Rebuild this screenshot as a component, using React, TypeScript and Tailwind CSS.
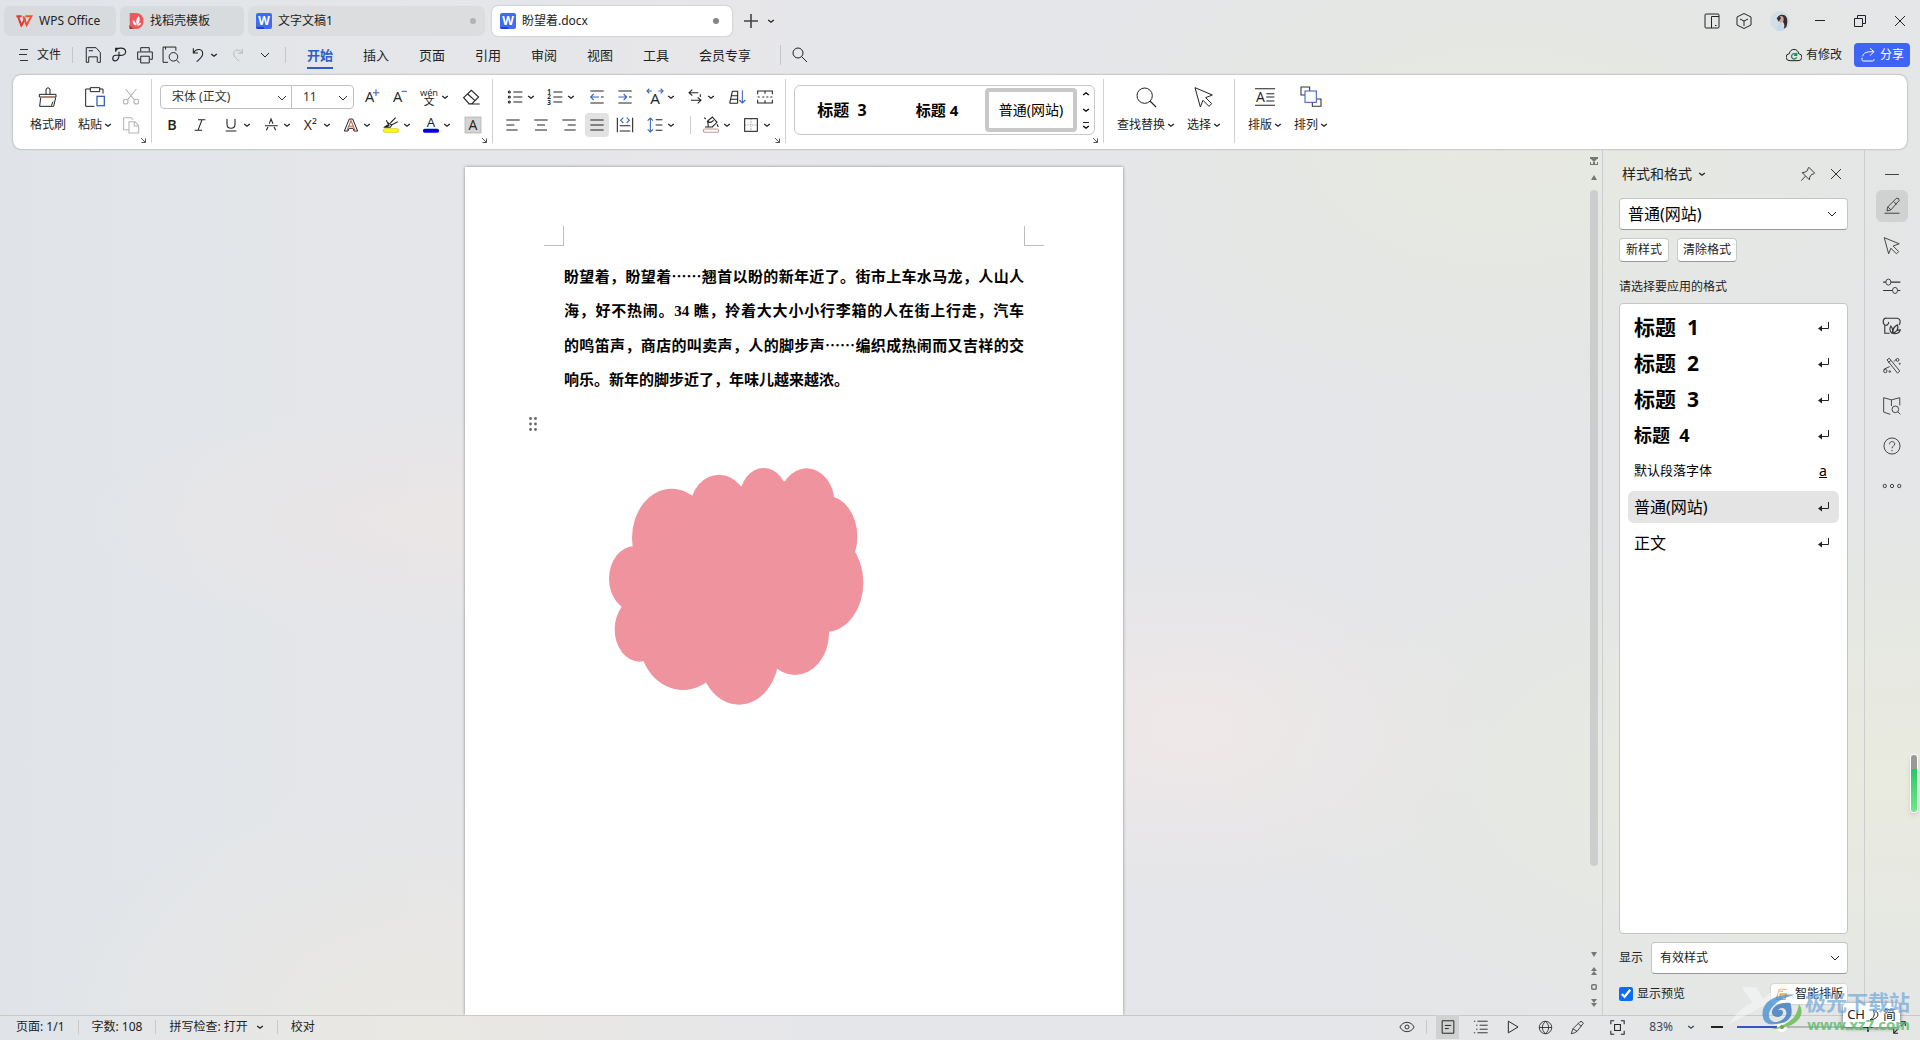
import { useState, type ReactNode } from "react";
import clsx from "clsx";

const BLUE = "#3a62c4";

/* Icons are drawn on a grid with three units per pixel */
function Icon({ size = 24, children, className }: { size?: number; children: ReactNode; className?: string }) {
  return (
    <svg
      width={size}
      height={size}
      viewBox="0 0 72 72"
      fill="none"
      stroke="currentColor"
      strokeWidth={3.2}
      className={clsx("shrink-0", className)}
      aria-hidden="true"
    >
      {children}
    </svg>
  );
}

function Letter({ x = 36, y = 52, size = 44, weight = 400, fill = "currentColor", children }: { x?: number; y?: number; size?: number; weight?: number; fill?: string; children: string }) {
  return (
    <text x={x} y={y} fontSize={size} fontWeight={weight} fill={fill} stroke="none" textAnchor="middle" fontFamily="'Open Sans', 'Noto Sans CJK SC', sans-serif">
      {children}
    </text>
  );
}

function Chevron({ className }: { className?: string }) {
  return (
    <svg width="8" height="8" viewBox="0 0 8 8" fill="none" stroke="currentColor" strokeWidth="1.4" className={clsx("shrink-0", className)} aria-hidden="true">
      <path d="M1.2 3 4 5.2 6.800 3" />
    </svg>
  );
}

function WideChevron({ className }: { className?: string }) {
  return (
    <svg width="10" height="10" viewBox="0 0 10 10" fill="none" stroke="currentColor" strokeWidth="1" className={clsx("pointer-events-none", className)} aria-hidden="true">
      <path d="M1 3l4 4 4-4" />
    </svg>
  );
}

function ToolButton({ label, menu, active, children, className }: { label: string; menu?: boolean; active?: boolean; children: ReactNode; className?: string }) {
  return (
    <button
      aria-label={label}
      className={clsx("flex h-6 shrink-0 items-center", menu ? "w-10" : "w-7 justify-center", className)}
    >
      <span className={clsx("rounded", active && "bg-[#e2e2e2]")}>{children}</span>
      {menu && <Chevron />}
    </button>
  );
}

function BigButton({ label, menu, children }: { label: string; menu?: boolean; children: ReactNode }) {
  return (
    <button className="flex shrink-0 flex-col items-center gap-[6px] text-xs">
      {children}
      <span className="flex h-5 items-center gap-[2px]">
        {label}
        {menu && <Chevron />}
      </span>
    </button>
  );
}

function Launcher() {
  return (
    <svg width="7" height="7" viewBox="0 0 7 7" fill="none" stroke="#555" className="absolute right-1 -bottom-px" aria-hidden="true">
      <path d="M1 1l4.500 4.500M5.500 1.500v4h-4" />
    </svg>
  );
}

function WordLogo() {
  return (
    <span className="relative flex size-4 shrink-0 items-center justify-center overflow-hidden rounded-xs bg-[#3f6af6] text-xs leading-none font-bold text-white">
      W
      <span className="absolute bottom-0 left-0 h-0.5 w-2 bg-[#1c46c8]" />
    </span>
  );
}

function TitleBar() {
  return (
    <header className="flex h-[41px] shrink-0 items-center pl-1 text-xs">
      <button className="flex h-[30px] w-28 items-center gap-[6px] rounded-md bg-[#d8dbde] pl-3">
        <svg width="17" height="12" viewBox="0 0 51 36" fill="none" stroke="#e23a33" strokeWidth="6" aria-hidden="true">
          <path d="M1 4h16M6 4l10 28 12-22" />
          <path d="M22 4l10 26L46 4H28" stroke="#ef5336" />
        </svg>
        WPS Office
      </button>
      <button className="ml-1 flex h-[30px] w-[124px] items-center gap-[6px] rounded-md bg-[#d8dbde] pl-[9px]">
        <svg width="15" height="16" viewBox="0 0 45 48" aria-hidden="true">
          <path d="M2 0h20a22 24 0 0 1 0 48H2z" fill="#ee5a5c" />
          <path d="M0 36l14 12H2z" fill="#a93a3c" />
          <path d="M22 38c-10-2-12-10-10-16 6 2 9 8 10 16zm2 0C20 26 22 14 30 10c4 10 2 20-6 28zm2 0c2-6 6-9 10-9 0 5-4 9-10 9z" fill="#fff" />
        </svg>
        找稻壳模板
      </button>
      <button className="ml-1 flex h-[30px] w-[237px] items-center gap-[6px] rounded-md bg-[#dcdddf] pr-[9px] pl-2">
        <WordLogo />
        文字文稿1
        <span className="ml-auto size-[6px] rounded-full bg-[#b0b2b4]" />
      </button>
      <button className="ml-[7px] flex h-[30px] w-60 items-center gap-[6px] rounded-md bg-white pr-[13px] pl-2 shadow-[0_0_2px_#00000040]">
        <WordLogo />
        盼望着.docx
        <span className="ml-auto size-[6px] rounded-full bg-[#858585]" />
      </button>
      <button aria-label="新建" className="ml-3 flex size-[14px]">
        <svg width="14" height="14" viewBox="0 0 14 14" stroke="#444" strokeWidth="1.600" aria-hidden="true">
          <path d="M7 0v14M0 7h14" />
        </svg>
      </button>
      <button aria-label="标签列表" className="ml-[9px]">
        <Chevron />
      </button>

      <div className="ml-auto flex items-center">
        <button aria-label="分屏" className="flex w-8 justify-center">
          <Icon size={18}><rect x="8" y="8" width="56" height="56" rx="4" strokeWidth="4" /><path d="M34 64V18h30M48 54h6" strokeWidth="4" /></Icon>
        </button>
        <button aria-label="工作台" className="flex w-8 justify-center">
          <Icon size={18}><path d="M36 6l28 14v32L36 66 8 52V20zM20 28l16 8 16-8M36 36v20" strokeWidth="4" /></Icon>
        </button>
        <button aria-label="账号" className="mr-[10px] ml-[10px] flex w-5 justify-center">
          <svg width="20" height="20" viewBox="0 0 60 60" aria-hidden="true">
            <circle cx="30" cy="30" r="30" fill="#d4dee4" />
            <path d="M20 60c0-14 4-22 14-26l6 26z" fill="#c6d8ea" />
            <path d="M22 20c4-10 22-12 27-2 5 8 3 22 0 30l-8 6c4-10 2-20-6-24z" fill="#352d33" />
            <ellipse cx="33" cy="25" rx="8" ry="10" fill="#cfa79f" />
            <path d="M20 22l9-8 4 8-7 10z" fill="#353037" />
          </svg>
        </button>
        <button aria-label="最小化" className="flex w-10 justify-center">
          <svg width="10" height="10" viewBox="0 0 10 10" stroke="#222" aria-hidden="true"><path d="M0 4.500h10" /></svg>
        </button>
        <button aria-label="还原" className="flex w-10 justify-center">
          <svg width="12" height="12" viewBox="0 0 12 12" fill="none" stroke="#222" aria-hidden="true"><path d="M.5 3.500h8v8h-8zM3.500 3.500v-3h8v8h-3" /></svg>
        </button>
        <button aria-label="关闭" className="flex w-10 justify-center">
          <svg width="10" height="10" viewBox="0 0 10 10" stroke="#222" aria-hidden="true"><path d="M0 0l10 10M10 0L0 10" /></svg>
        </button>
      </div>
    </header>
  );
}

const menus = ["开始", "插入", "页面", "引用", "审阅", "视图", "工具", "会员专享"];

function MenuBar() {
  const [current, setCurrent] = useState("开始");
  return (
    <nav className="flex h-[34px] shrink-0 items-start pr-[10px] pl-[17px] text-xs text-[#222]">
      <div className="flex h-[28px] items-center">
        <button className="flex w-[55px] items-center gap-2">
          <svg width="12" height="12" viewBox="0 0 12 12" stroke="#333" aria-hidden="true"><path d="M3 .5h8M2 5.500h8M3 11.500h8" /></svg>
          文件
        </button>
        <div className="h-4 w-px bg-[#c4c6c9]" />
        <button aria-label="保存" className="ml-2 flex w-6 justify-center">
          <Icon size={22}><path d="M14 12h32l14 16v32h-8M14 12v48h8M22 60V42h28v18M22 22h14" strokeLinejoin="round" /></Icon>
        </button>
        <button aria-label="输出为PDF" className="ml-[2px] flex w-6 justify-center">
          <Icon size={20}><path d="M34 14H24v12M24 26c2-16 34-18 36 0 0 14-14 14-24 13M36 39H24c-12 0-14 18-4 20 10 1 16-8 16-20V26" transform="translate(0 -2)" strokeWidth="4" /></Icon>
        </button>
        <button aria-label="打印" className="ml-[2px] flex w-6 justify-center">
          <Icon size={22}><path d="M22 24V12h28v12M20 50H12V26h48v24h-8M22 40h28v22H22z" /></Icon>
        </button>
        <button aria-label="打印预览" className="ml-[2px] flex w-6 justify-center">
          <Icon size={22}><path d="M26 60H10V10h42v12M18 10v8" /><circle cx="44" cy="42" r="14" /><path d="M54 53l10 9" /></Icon>
        </button>
        <button aria-label="撤销" className="ml-[3px] flex w-9 items-center">
          <Icon size={24}><path d="M22 16v14h14M22 30C32 14 50 18 50 32c0 10-8 14-18 24" /></Icon>
          <Chevron />
        </button>
        <button aria-label="恢复" className="ml-1 flex w-6 justify-center text-[#b5b7b9]">
          <Icon size={22}><path d="M50 16v14H36M50 30C40 14 22 18 22 32c0 10 8 14 18 24" /></Icon>
        </button>
        <button aria-label="更多" className="ml-[5px] flex w-5 justify-center"><WideChevron /></button>
        <div className="ml-[10px] h-4 w-px bg-[#c4c6c9]" />
      </div>
      <div className="ml-[21px] flex gap-[30px] text-[13px]">
        {menus.map((m) => (
          <button
            key={m}
            onClick={() => setCurrent(m)}
            className={clsx("flex h-7 items-center border-b-2 pt-[3px]", current === m ? "border-[#2f5dc8] font-bold text-[#2f5dc8]" : "border-transparent")}
          >
            {m}
          </button>
        ))}
      </div>
      <div className="flex h-[28px] items-center">
        <div className="ml-[29px] h-5 w-px bg-[#c4c6c9]" />
        <button aria-label="搜索" className="ml-[10px]">
          <Icon size={18}><circle cx="28" cy="28" r="20" strokeWidth="4" /><path d="M42 42l22 22" strokeWidth="4" /></Icon>
        </button>
      </div>
      <div className="ml-auto flex h-[28px] items-center gap-3">
        <button className="flex items-center gap-1">
          <svg width="16" height="14" viewBox="0 0 48 42" fill="none" stroke="#222" strokeWidth="3" aria-hidden="true">
            <path d="M12 38a10 10 0 0 1-2-21C12 0 36 0 38 17a10 10 0 0 1-2 21z" />
            <path d="M32 22a8 8 0 1 0 0 6M32 14v8h-8" stroke="#1c8c5a" strokeWidth="4" />
          </svg>
          有修改
        </button>
        <button className="flex h-6 items-center gap-1 rounded bg-[#3d64f5] px-[6px] text-white">
          <svg width="16" height="16" viewBox="0 0 48 48" fill="none" stroke="#fff" strokeWidth="3" aria-hidden="true">
            <path d="M6 32v6q0 4 4 4h28q4 0 4-4v-2M8 28c2-10 10-14 32-14M30 4l12 10-12 12" />
          </svg>
          分享
        </button>
      </div>
    </nav>
  );
}

function FontGroup() {
  return (
    <div className="relative flex h-16 w-[341px] shrink-0 flex-col border-r border-[#cfd1d4] pt-[6px]">
      <div className="flex items-center pl-2">
        <div className="flex h-6 shrink-0 rounded border border-[#bfc1c4] text-xs text-[#333]">
          <div className="relative w-[131px] border-r border-[#bfc1c4]">
            <select aria-label="字体" className="h-full w-full appearance-none pl-[11px]"><option>宋体 (正文)</option></select>
            <WideChevron className="absolute top-[7px] right-1" />
          </div>
          <div className="relative w-[61px]">
            <select aria-label="字号" className="h-full w-full appearance-none pl-[11px]"><option>11</option></select>
            <WideChevron className="absolute top-[7px] right-[5px]" />
          </div>
        </div>
        <ToolButton label="增大字号" className="ml-[3px]">
          <Icon><Letter x={32}>A</Letter><path d="M51 13v20M42 23h19" stroke={BLUE} /></Icon>
        </ToolButton>
        <ToolButton label="减小字号">
          <Icon><Letter x={32}>A</Letter><path d="M44 19h16" stroke={BLUE} /></Icon>
        </ToolButton>
        <ToolButton label="拼音指南" menu className="ml-1">
          <Icon><Letter y={32} size={28}>wén</Letter><Letter y={60} size={32}>文</Letter></Icon>
        </ToolButton>
        <ToolButton label="清除格式">
          <Icon><path d="M14 38l23-22 22 20-20 20H30zM26 27l22 20M28 57h34" /></Icon>
        </ToolButton>
      </div>
      <div className="mt-1 flex items-center pl-[6px]">
        <ToolButton label="加粗"><Icon><Letter weight={600} size={43}>B</Letter></Icon></ToolButton>
        <ToolButton label="倾斜"><Icon><path d="M30 20h22M20 52h22M42 20L30 52" /></Icon></ToolButton>
        <ToolButton label="下划线" menu className="ml-[5px]"><Icon><path d="M24 18v16c0 16 24 16 24 0V18M20 54h32" /></Icon></ToolButton>
        <ToolButton label="删除线" menu><Icon><path d="M18 38h38M22 52l5-10M50 52l-5-10M31 32l5-14 6 14" /></Icon></ToolButton>
        <ToolButton label="上标" menu><Icon><Letter size={42} x={34}>X²</Letter></Icon></ToolButton>
        <ToolButton label="文字效果" menu>
          <Icon><path d="M16 54l15-36h10l15 36H45l-3-8H30l-3 8z" strokeWidth="3" /><path d="M24 52l12-29 12 29M30 40h12" stroke="#c0603c" /></Icon>
        </ToolButton>
        <ToolButton label="突出显示" menu>
          <Icon><path d="M14 44l12-8M22 22l8 16-14 5h18l6-10M24 28l14 8 18-10M34 30l16-16" /><rect x="13" y="47" width="46" height="11" rx="5" fill="#ffff00" stroke="#c0c010" strokeWidth="2" /></Icon>
        </ToolButton>
        <ToolButton label="字体颜色" menu>
          <Icon><Letter y={42} size={40}>A</Letter><rect x="12" y="47" width="48" height="12" rx="5" fill="#0000e0" stroke="none" /></Icon>
        </ToolButton>
        <ToolButton label="字符底纹">
          <Icon><rect x="12" y="12" width="48" height="48" fill="#d4d4d4" stroke="#a8a8a8" strokeWidth="2" /><Letter y={51} size={42}>A</Letter></Icon>
        </ToolButton>
      </div>
      <Launcher />
    </div>
  );
}

function ParagraphGroup() {
  return (
    <div className="relative flex h-16 w-[293px] shrink-0 flex-col border-r border-[#cfd1d4] pt-[6px]">
      <div className="flex items-center pl-[10px]">
        <ToolButton label="项目符号" menu>
          <Icon><path d="M31 21h27M31 36h27M31 51h27" /><circle cx="19" cy="21" r="3" /><circle cx="19" cy="36" r="3" /><circle cx="19" cy="51" r="3" /></Icon>
        </ToolButton>
        <ToolButton label="编号" menu>
          <Icon><path d="M31 21h27M31 36h27M31 51h27" /><Letter x={18} y={27} size={19} weight={700}>1</Letter><Letter x={18} y={43} size={19} weight={700}>2</Letter><Letter x={18} y={59} size={19} weight={700}>3</Letter></Icon>
        </ToolButton>
        <ToolButton label="减少缩进"><Icon><path d="M16 18h40M16 54h40M48 36h8" /><path d="M42 36H18M26 27l-9 9 9 9" stroke={BLUE} /></Icon></ToolButton>
        <ToolButton label="增加缩进"><Icon><path d="M16 18h40M16 54h40M48 36h8" /><path d="M16 36h24M32 27l9 9-9 9" stroke={BLUE} /></Icon></ToolButton>
        <ToolButton label="中文版式" menu className="ml-1">
          <Icon><Letter y={56} size={46}>A</Letter><path d="M26 18H13M19 11l-7 7 7 7M46 18h13M53 11l7 7-7 7" stroke={BLUE} /></Icon>
        </ToolButton>
        <ToolButton label="段落方向" menu><Icon><path d="M28 14l-10 9 10 9M18 23h28M44 37l10 9-10 9M54 46H24M52 28v8" /></Icon></ToolButton>
        <ToolButton label="排序"><Icon><path d="M14 55l8-36h16v36M20 32h18M17 43h21M14 55h24" /><path d="M52 16v38M43 45l9 9 9-9" stroke={BLUE} /></Icon></ToolButton>
        <ToolButton label="制表位"><Icon><path d="M14 28V18h44v10M14 44v10h44V44M36 18v8M36 46v8M14 36h6M28 36h6M40 36h6M52 36h6" /></Icon></ToolButton>
      </div>
      <div className="mt-1 flex items-center pl-[6px]">
        <ToolButton label="左对齐"><Icon><path d="M16 21h40M16 36h24M16 51h34" /></Icon></ToolButton>
        <ToolButton label="居中对齐"><Icon><path d="M16 21h40M24 36h24M18 51h36" /></Icon></ToolButton>
        <ToolButton label="右对齐"><Icon><path d="M16 21h40M32 36h24M22 51h34" /></Icon></ToolButton>
        <ToolButton label="两端对齐" active><Icon><path d="M16 21h40M16 36h40M16 51h40" /></Icon></ToolButton>
        <ToolButton label="分散对齐">
          <Icon><path d="M13 14v44M59 14v44M20 38h32M20 54h32" /><path d="M31 14l-8 8 8 8M41 14l8 8-8 8" stroke={BLUE} /></Icon>
        </ToolButton>
        <ToolButton label="行距" menu className="ml-1">
          <Icon><path d="M38 20h20M38 36h20M38 52h20" /><path d="M22 15v42M14 23l8-8 8 8M14 49l8 8 8-8" stroke={BLUE} /></Icon>
        </ToolButton>
        <div className="mr-2 ml-[7px] h-[18px] w-px bg-[#cfd1d4]" />
        <ToolButton label="底纹颜色" menu>
          <Icon><path d="M26 24l14-12 14 16-14 14H28zM24 24c6 6 14 4 20-2M20 18l-4-4M54 34l4 8M18 42h12" /><rect x="13" y="48" width="46" height="10" rx="5" stroke="#c39a94" /></Icon>
        </ToolButton>
        <ToolButton label="边框" menu>
          <Icon><path d="M36 18v36M18 36h36" stroke="#aaa" strokeDasharray="4 3" /><rect x="17" y="17" width="38" height="38" /></Icon>
        </ToolButton>
      </div>
      <Launcher />
    </div>
  );
}

function Ribbon() {
  return (
    <section aria-label="工具栏" className="mr-[13px] ml-[13px] flex h-[74px] shrink-0 items-start rounded-lg bg-white pt-1 text-[#222] shadow-[0_0_2px_#00000070]">
      <div className="relative flex h-16 w-[139px] shrink-0 border-r border-[#cfd1d4] pt-[6px] pl-[17px]">
        <BigButton label="格式刷">
          <Icon><path d="M30 28V12q6-8 12 0v16M10 28h50v8H10zM14 38l-3 26h42l6-26M46 62l5-12" strokeWidth="3" strokeLinejoin="round" /><path d="M26 37h22" stroke="#e4703a" /></Icon>
        </BigButton>
        <div className="ml-3">
          <BigButton label="粘贴" menu>
            <Icon><path d="M22 12H8v52h26M50 12h10v14M22 8h28v12H22z" strokeWidth="3" /><rect x="42" y="34" width="22" height="28" stroke={BLUE} strokeWidth="4" /></Icon>
          </BigButton>
        </div>
        <div className="ml-[7px] flex flex-col gap-1 text-[#b4b4b4]">
          <button aria-label="剪切"><Icon><path d="M20 12l26 32M52 12L26 44" /><circle cx="20" cy="50" r="7" /><circle cx="52" cy="50" r="7" /></Icon></button>
          <button aria-label="复制"><Icon><path d="M28 50H14V14h22l6 6M30 26h18l11 12v22H30zM46 26v13h12" /></Icon></button>
        </div>
        <Launcher />
      </div>
      <FontGroup />
      <ParagraphGroup />

      <div className="relative flex h-16 w-[318px] shrink-0 border-r border-[#cfd1d4] pt-[6px] pl-2">
        <div className="flex h-[50px] w-[301px] items-center rounded-md border border-[#c6c8cb] text-black">
          <button className="w-[94px] text-base font-bold">标题&nbsp; 3</button>
          <button className="w-24 text-[15px] font-bold">标题 4</button>
          <button className="h-11 w-[92px] rounded-sm border-4 border-[#c8c8c8] text-sm">普通(网站)</button>
          <div className="flex flex-1 flex-col items-center gap-2">
            <button aria-label="上一行"><Chevron className="rotate-180" /></button>
            <button aria-label="下一行"><Chevron /></button>
            <button aria-label="全部样式" className="flex flex-col items-center"><span className="h-px w-[6px] bg-[#222]" /><Chevron /></button>
          </div>
        </div>
        <Launcher />
      </div>

      <div className="flex h-16 w-[131px] shrink-0 gap-3 border-r border-[#cfd1d4] pt-[6px] pl-[13px]">
        <BigButton label="查找替换" menu>
          <Icon><circle cx="32" cy="32" r="23" strokeWidth="3" /><path d="M48 48l18 18" /></Icon>
        </BigButton>
        <BigButton label="选择" menu>
          <Icon><path d="M9 8l52 22-20 8 18 18-8 8-18-18-8 20z" strokeWidth="3" /></Icon>
        </BigButton>
      </div>
      <div className="flex h-16 gap-3 pt-[6px] pl-[13px]">
        <BigButton label="排版" menu>
          <Icon><path d="M6 11h60M6 61h60M40 26h24M40 36h24M40 48h24" /><Letter x={22} y={50} size={42}>A</Letter></Icon>
        </BigButton>
        <BigButton label="排列" menu>
          <Icon><path d="M18 30H6V6h26v12M54 42h12v22H40V52" stroke="#333" /><rect x="18" y="18" width="34" height="34" stroke={BLUE} /></Icon>
        </BigButton>
      </div>
    </section>
  );
}

function DocumentPage() {
  return (
    <article className="relative h-full w-[658px] shrink-0 bg-white px-[99px] pt-[59px] text-black shadow-[0_0_3px_#00000066]">
      <div className="-mx-5 flex justify-between">
        <span className="h-5 w-5 border-r border-b border-[#bdbdbd]" />
        <span className="h-5 w-5 border-b border-l border-[#bdbdbd]" />
      </div>
      <p lang="zh-CN" className="mt-[13px] text-justify font-['Noto_Sans_CJK_SC',sans-serif] text-[15px] leading-[34px] font-bold">
        <span className="block [text-align-last:justify]">盼望着，盼望着……翘首以盼的新年近了。街市上车水马龙，人山人</span>
        <span className="block [text-align-last:justify]">
          海，好不热闹。<span className="font-['Liberation_Serif',serif]">34 </span>瞧，拎着大大小小行李箱的人在街上行走，汽车
        </span>
        <span className="block [text-align-last:justify]">的鸣笛声，商店的叫卖声，人的脚步声……编织成热闹而又吉祥的交</span>
        <span className="block">响乐。新年的脚步近了，年味儿越来越浓。</span>
      </p>
      <svg width="8" height="16" viewBox="0 0 8 16" fill="#666" className="mt-[20px] -ml-[35px]" aria-hidden="true">
        <circle cx="1.500" cy="2.500" r="1.400" /><circle cx="6.500" cy="2.500" r="1.400" />
        <circle cx="1.500" cy="8" r="1.400" /><circle cx="6.500" cy="8" r="1.400" />
        <circle cx="1.500" cy="13.500" r="1.400" /><circle cx="6.500" cy="13.500" r="1.400" />
      </svg>
      <svg width="256" height="238" viewBox="86 88 768 714" fill="#ef939e" className="mt-[36px] ml-[45px]" role="img" aria-label="云形">
        <ellipse cx="274" cy="298" rx="119" ry="148" />
        <ellipse cx="416" cy="208" rx="86" ry="100" />
        <ellipse cx="550" cy="178" rx="72" ry="90" />
        <ellipse cx="679" cy="190" rx="83" ry="101" />
        <ellipse cx="740" cy="294" rx="91" ry="122" />
        <ellipse cx="736" cy="432" rx="113" ry="148" />
        <ellipse cx="644" cy="584" rx="102" ry="125" />
        <ellipse cx="476" cy="646" rx="120" ry="152" />
        <ellipse cx="308" cy="600" rx="132" ry="154" />
        <ellipse cx="178" cy="572" rx="75" ry="97" />
        <ellipse cx="162" cy="420" rx="76" ry="97" />
        <path d="M170 320L335 172 484 142 614 128 762 180 825 340 745 579 592 688 378 730 192 664 124 506z" />
      </svg>
    </article>
  );
}

function DocScrollbar() {
  return (
    <div className="flex w-4 shrink-0 flex-col items-center pt-2 pb-2 text-[#777]">
      <svg width="8" height="8" viewBox="0 0 8 8" fill="currentColor" aria-hidden="true"><path d="M0 0h8v2H0zM1 2h6L4 5zM0 7h8v1H0zM0 5h1v2H0zM7 5h1v2H7zM3 5h2v2H3z" /></svg>
      <svg width="6" height="5" viewBox="0 0 6 5" fill="currentColor" className="mt-[10px]" aria-hidden="true"><path d="M3 0l3 5H0z" /></svg>
      <div className="mt-[10px] w-2 rounded-full bg-[#cccecd] flex-[678]" />
      <div className="flex-[86]" />
      <svg width="6" height="5" viewBox="0 0 6 5" fill="currentColor" aria-hidden="true"><path d="M3 5l3-5H0z" /></svg>
      <svg width="6" height="8" viewBox="0 0 6 8" fill="currentColor" className="mt-[10px]" aria-hidden="true"><path d="M3 0l3 4H0zM3 4l3 4H0z" /></svg>
      <svg width="6" height="6" viewBox="0 0 6 6" fill="none" stroke="currentColor" strokeWidth="1.500" className="mt-[9px]" aria-hidden="true"><rect x=".75" y=".75" width="4.500" height="4.500" rx="1" /></svg>
      <svg width="6" height="8" viewBox="0 0 6 8" fill="currentColor" className="mt-[9px]" aria-hidden="true"><path d="M3 8l3-4H0zM3 4l3-4H0z" /></svg>
    </div>
  );
}

const styles = [
  { name: "标题\u00a0 1", className: "text-[21px] font-bold" },
  { name: "标题\u00a0 2", className: "text-[21px] font-bold" },
  { name: "标题\u00a0 3", className: "text-[21px] font-bold" },
  { name: "标题\u00a0 4", className: "text-lg font-bold" },
  { name: "默认段落字体", className: "text-[13px]", char: true },
  { name: "普通(网站)", className: "text-base" },
  { name: "正文", className: "text-base" },
];

function StylePanel() {
  const [selected, setSelected] = useState("普通(网站)");
  return (
    <aside className="flex w-[262px] shrink-0 flex-col border-l border-[#cbcdce] pr-4 pl-4 text-xs text-[#222]">
      <div className="mt-[13px] flex h-6 items-center pl-[3px]">
        <h2 className="text-sm">样式和格式</h2>
        <Chevron className="ml-[6px]" />
        <button aria-label="固定" className="ml-auto">
          <Icon size={16}><path d="M40 6l26 26-6 4-8 2-8 12-2 12L10 30l12-2 12-8 2-8zM24 46L6 66" strokeWidth="4" strokeLinejoin="round" /></Icon>
        </button>
        <button aria-label="关闭面板" className="mr-[6px] ml-[14px]">
          <svg width="12" height="12" viewBox="0 0 12 12" stroke="#333" aria-hidden="true"><path d="M1 1l10 10M11 1L1 11" /></svg>
        </button>
      </div>
      <div className="relative mt-3">
        <select aria-label="当前样式" className="h-8 w-full appearance-none rounded border border-[#c4c6c6] border-b-[#999] bg-white pl-2 text-base text-black">
          <option>普通(网站)</option>
        </select>
        <WideChevron className="absolute top-[11px] right-[11px]" />
      </div>
      <div className="mt-2 flex gap-2">
        <button className="h-6 rounded border border-[#c8caca] border-b-[#999] bg-white px-[6px]">新样式</button>
        <button className="h-6 rounded border border-[#c8caca] border-b-[#999] bg-white px-[5px]">清除格式</button>
      </div>
      <p className="mt-[15px] leading-5">请选择要应用的格式</p>
      <ul className="mt-[6px] min-h-0 flex-1 rounded border border-[#c4c6c6] bg-white px-2 pt-[5px] text-black">
        {styles.map((s) => (
          <li key={s.name} className="flex h-9 items-center">
            <button
              onClick={() => setSelected(s.name)}
              className={clsx("flex h-8 w-full items-center justify-between rounded-md pr-[10px] pl-[6px]", selected === s.name && "bg-[#e4e4e4]")}
            >
              <span className={s.className}>{s.name}</span>
              {s.char ? (
                <span className="w-3 text-center text-sm leading-4 underline">a</span>
              ) : (
                <svg width="11" height="10" viewBox="0 0 11 10" fill="none" stroke="#222" aria-hidden="true">
                  <path d="M10.500 0v6.500H2" /><path d="M4 3.500v6L0 6.500z" fill="#222" stroke="none" />
                </svg>
              )}
            </button>
          </li>
        ))}
      </ul>
      <label className="mt-2 flex items-center gap-2">
        <span className="shrink-0">显示</span>
        <span className="relative flex-1">
          <select className="h-8 w-full appearance-none rounded border border-[#c4c6c6] border-b-[#999] bg-white pl-2">
            <option>有效样式</option>
          </select>
          <WideChevron className="absolute top-[11px] right-2" />
        </span>
      </label>
      <div className="mt-2 mb-[9px] flex h-6 items-center">
        <label className="flex items-center gap-1">
          <input type="checkbox" defaultChecked className="size-[14px] accent-[#0b6cf5]" />
          显示预览
        </label>
        <button className="ml-auto flex h-[22px] items-center gap-[6px] rounded border border-[#d4d6d2] bg-white px-1">
          <svg width="14" height="12" viewBox="0 0 42 36" fill="none" stroke="#eba23c" strokeWidth="4" aria-hidden="true"><path d="M34 4H12L4 34h24M16 18h18l-4 16H14zM10 10h14" /></svg>
          智能排版
        </button>
      </div>
    </aside>
  );
}

function SideRail() {
  const cell = "flex size-8 items-center justify-center rounded-md";
  return (
    <div className="flex w-14 shrink-0 flex-col items-center gap-2 border-l border-[#cbcdce] pr-[2px] text-[#333]">
      <button aria-label="收起" className="mt-[17px] flex h-4 items-center"><span className="h-px w-[14px] bg-[#444]" /></button>
      <button aria-label="样式" className={clsx(cell, "bg-[#d0d1d1]")}><Icon size={20}><path d="M9 62h54M18 54l2-14L52 8q10-2 10 8L32 50zM22 40l10 10M42 20l10 10" /></Icon></button>
      <button aria-label="选择窗格" className={cell}><Icon size={20}><path d="M8 6l54 22-22 8 20 20-8 8-20-20-8 20z" /></Icon></button>
      <button aria-label="属性" className={cell}><Icon size={20}><path d="M4 22h10M32 22h34M4 52h34M56 52h10" strokeWidth="4" /><ellipse cx="23" cy="22" rx="9" ry="11" /><ellipse cx="47" cy="52" rx="9" ry="11" /></Icon></button>
      <button aria-label="图库" className={cell}><Icon size={20}><path d="M28 62H10V32C0 26 4 6 16 8h40c10 2 12 14 6 24M10 32c8 4 14-2 14-10M36 62c-8-6-10-18-4-26 6 8 8 18 4 26zM40 62c-2-16 6-26 16-30 4 14-2 24-16 30zM44 64c2-8 12-14 22-14-2 8-8 14-22 14z" strokeWidth="4" /></Icon></button>
      <button aria-label="智能工具" className={cell}><Icon size={20}><path d="M18 14l8-6 38 46-8 8zM22 24l10-8M6 48l22-10M44 20l6-8" /><circle cx="12" cy="54" r="6" /><circle cx="56" cy="14" r="5" /><circle cx="28" cy="56" r="3" /><circle cx="64" cy="28" r="2" /></Icon></button>
      <button aria-label="查阅" className={cell}><Icon size={20}><path d="M34 14L6 6v52l24 8M34 14l30-8v28M34 14v22" /><circle cx="48" cy="48" r="12" /><path d="M57 57l9 9" /></Icon></button>
      <button aria-label="帮助" className={cell}><Icon size={20}><circle cx="36" cy="36" r="29" /><path d="M27 30c0-14 19-12 19-1 0 7-10 7-10 15M36 50v5" /></Icon></button>
      <button aria-label="更多工具" className={cell}><Icon size={20}><circle cx="10" cy="36" r="6" /><circle cx="36" cy="36" r="6" /><circle cx="62" cy="36" r="6" /></Icon></button>
    </div>
  );
}

function StatusBar() {
  const divider = <span className="h-[14px] w-px bg-[#c8caca]" />;
  const cell = "flex h-6 w-8 items-center justify-center";
  return (
    <footer className="flex h-[25px] shrink-0 items-center border-t border-[#c8caca] pb-[2px] pl-4 text-xs text-[#222]">
      <div className="flex items-center gap-[13px]">
        <span>页面: 1/1</span>
        {divider}
        <span>字数: 108</span>
        {divider}
        <button className="flex items-center gap-2">拼写检查: 打开 <Chevron /></button>
        {divider}
        <button>校对</button>
      </div>
      <div className="mr-[14px] ml-auto flex items-center">
        <button aria-label="护眼模式" className="mr-[7px] flex w-6 justify-center"><Icon size={16}><path d="M4 36C18 8 54 8 68 36 54 64 18 64 4 36z" strokeWidth="4" /><circle cx="36" cy="36" r="9" strokeWidth="4" /></Icon></button>
        {divider}
        <button aria-label="页面视图" className="mr-[6px] ml-[9px] flex h-6 w-[23px] items-center justify-center bg-[#d0d1d1]"><Icon size={14}><path d="M6 4h60v64H6zM20 28h32M20 44h20" strokeWidth="5" /></Icon></button>
        <button aria-label="大纲" className={cell}><Icon size={16}><path d="M20 10h46M30 28h36M30 46h36M20 62h46M4 10h6M14 28h6M14 46h6M4 62h6" strokeWidth="4" /></Icon></button>
        <button aria-label="阅读版式" className={cell}><Icon size={14}><path d="M12 6l50 30-50 30z" strokeWidth="5" /></Icon></button>
        <button aria-label="Web版式" className={cell}><Icon size={15}><circle cx="36" cy="36" r="30" strokeWidth="4" /><path d="M6 36h60M36 6c-20 20-20 40 0 60M36 6c20 20 20 40 0 60" strokeWidth="4" /></Icon></button>
        <button aria-label="写作模式" className={cell}><Icon size={15}><path d="M6 66l8-24L48 8q12-4 16 8L34 54q-8 8-28 12zM14 42l20 12M40 18l14 12" strokeWidth="4" /></Icon></button>
        <span className="ml-[5px]">{divider}</span>
        <button aria-label="适合页面" className="ml-3 flex"><Icon size={15}><path d="M4 20V4h16M52 4h16v16M68 52v16H52M20 68H4V52M22 22h28v28H22z" strokeWidth="5" /></Icon></button>
        <button className="ml-6 flex items-center gap-[14px] text-[#3c4858]">83% <Chevron /></button>
        <button aria-label="缩小" className="ml-4 h-[2px] w-3 bg-[#222]" />
        <input
          type="range"
          aria-label="缩放"
          defaultValue={37}
          className="mr-2 ml-[14px] h-[2px] w-[118px] appearance-none bg-[linear-gradient(to_right,#3555c4_37%,#b5b7b8_37%)] [&::-webkit-slider-thumb]:size-[10px] [&::-webkit-slider-thumb]:appearance-none [&::-webkit-slider-thumb]:rounded-full [&::-webkit-slider-thumb]:border-[3px] [&::-webkit-slider-thumb]:border-white [&::-webkit-slider-thumb]:bg-[#777]"
        />
        <button aria-label="放大"><Icon size={10}><path d="M36 2v68M2 36h68" strokeWidth="12" /></Icon></button>
        <button aria-label="全屏" className="ml-5"><Icon size={13}><path d="M4 44v24h24M44 4h24v24M6 66l22-22M66 6L44 28" strokeWidth="6" /></Icon></button>
      </div>
    </footer>
  );
}

function Overlays() {
  return (
    <>
      <div className="absolute right-[2px] bottom-[227px] flex h-[59px] w-2 flex-col overflow-hidden rounded-full border border-white shadow-md">
        <span className="h-[14px] bg-[#999]" />
        <span className="flex-1 bg-linear-to-b from-[#22c766] to-[#6be88a]" />
      </div>
      <div className="absolute right-5 bottom-[13px] flex h-6 items-center gap-1 rounded-sm bg-white px-1 text-[13px] text-[#222] shadow-[0_1px_4px_#00000099]">
        CH
        <svg width="10" height="12" viewBox="0 0 10 12" fill="none" stroke="#222" aria-hidden="true"><path d="M4 1c7 1 7 9-3 10 5-3 5-7 3-10z" /></svg>
        简
      </div>
      <div className="pointer-events-none absolute right-[10px] bottom-[6px] flex items-end opacity-80">
        <svg width="80" height="50" viewBox="430 725 240 150" fill="none" aria-hidden="true">
          <path d="M480 735h44l20 34 44-34h30l-66 52-112 60c28-40 48-56 72-66z" fill="#fff" opacity=".5" />
          <path d="M638 757C570 752 530 790 546 832c8 16 30 18 46 8-30 2-36-20-26-38 12-20 36-36 72-45z" fill="#4a93d2" />
          <path d="M626 782c-34-6-62 16-54 34 8 14 34 8 32-8-2-6-8-8-14-4 6-12 26-8 24 10-2 18-28 30-50 24 32 16 66-2 66-30 0-10-2-20-4-26z" fill="#3a78c0" />
          <path d="M652 785c26 38-16 76-86 76 24-6 66-20 78-48 4-10 6-18 8-28z" fill="#62bb4c" />
        </svg>
        <div className="text-right">
          <div className="text-[21px] leading-6 font-bold text-[#7fb0dc]">极光下载站</div>
          <div className="text-[15px] leading-5 font-bold text-[#58bd6c]">www.xz7.com</div>
        </div>
      </div>
    </>
  );
}

export default function App() {
  return (
    <div
      lang="zh-CN"
      className="relative flex h-screen flex-col overflow-hidden bg-[radial-gradient(ellipse_at_62%_70%,#efe8e8_0%,#efe8e800_18%),radial-gradient(ellipse_at_22%_50%,#ebe6e6_0%,#ebe6e600_16%),radial-gradient(ellipse_at_22%_100%,#eae8e3_0%,#eae8e300_18%),radial-gradient(ellipse_at_100%_75%,#e9ebdf_0%,#e9ebdf00_26%),radial-gradient(ellipse_at_78%_15%,#e7e9e1_0%,#e7e9e100_22%),linear-gradient(to_right,#e0e4e8,#e7e7ea_35%,#e4e6e9_60%,#e4e6e7)] font-['Noto_Sans','Noto_Sans_CJK_SC',sans-serif] text-[#222]"
    >
      <TitleBar />
      <MenuBar />
      <Ribbon />
      <main className="flex min-h-0 flex-1">
        <div className="flex min-w-0 flex-1 justify-center overflow-hidden pt-[18px] pl-[2px]">
          <DocumentPage />
        </div>
        <DocScrollbar />
        <StylePanel />
        <SideRail />
      </main>
      <StatusBar />
      <Overlays />
    </div>
  );
}
